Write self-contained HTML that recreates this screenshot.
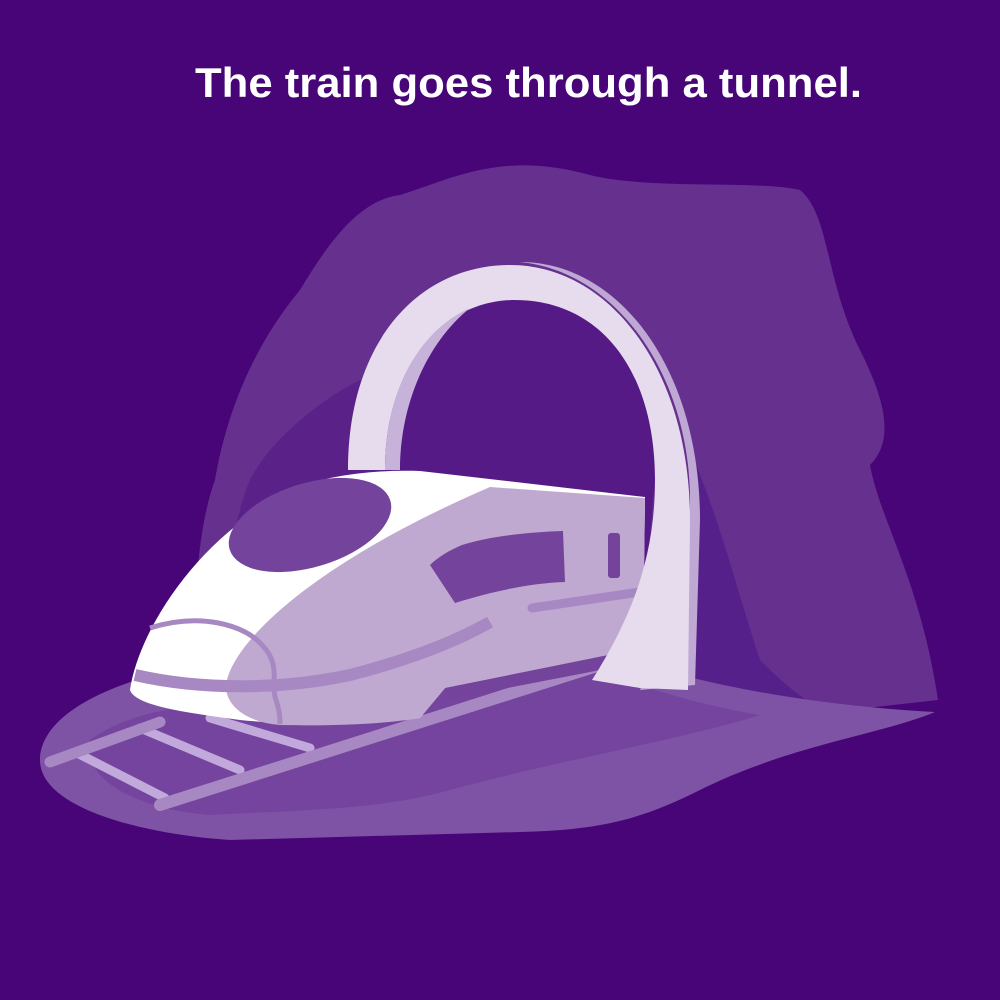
<!DOCTYPE html>
<html><head><style>
html,body{margin:0;padding:0;background:#470577;}
svg{display:block}
</style></head><body>
<svg width="1000" height="1000" viewBox="0 0 1000 1000" xmlns="http://www.w3.org/2000/svg">
<rect width="1000" height="1000" fill="#470577"/>
<text x="195" y="97" textLength="667" lengthAdjust="spacingAndGlyphs" font-family="Liberation Sans, sans-serif" font-weight="bold" font-size="42" fill="#ffffff">The train goes through a tunnel.</text>
<!-- mountain -->
<path d="M300,290 C330,240 360,200 400,195 C450,180 500,150 590,175 C650,190 760,180 800,190 C830,215 825,280 860,350 C885,400 895,440 870,465 C880,520 920,580 938,700 L830,712 C760,705 720,670 700,650 L600,660 L200,680 C190,600 200,520 215,480 C225,420 250,350 300,290 Z" fill="#66308f"/>
<!-- darker inner areas -->
<path d="M360,380 C320,400 270,440 250,480 C225,540 225,620 240,690 L620,680 L640,500 Z" fill="#5a2189"/>
<path d="M690,450 C720,520 740,600 760,660 C790,690 810,705 830,712 L690,700 Z" fill="#55208a"/>
<!-- ground -->
<path d="M40,760 C40,715 110,680 200,665 L600,650 C680,680 800,705 935,712 C880,735 790,745 700,790 C640,820 600,830 520,832 L230,840 C150,835 40,810 40,760 Z" fill="#7e53a5"/>
<path d="M90,740 C130,710 200,700 300,700 L600,670 C650,690 700,705 760,715 C680,740 560,760 450,790 C380,810 300,810 210,815 C140,810 80,780 90,740 Z" fill="#74449e"/>
<!-- rails -->
<g stroke-linecap="round">
<line x1="75" y1="752" x2="165" y2="798" stroke="#c2a9db" stroke-width="9"/>
<line x1="140" y1="728" x2="240" y2="770" stroke="#c2a9db" stroke-width="9"/>
<line x1="210" y1="718" x2="310" y2="748" stroke="#c2a9db" stroke-width="9"/>
<line x1="50" y1="762" x2="160" y2="722" stroke="#a888c2" stroke-width="11"/>
<line x1="160" y1="805" x2="600" y2="665" stroke="#a888c2" stroke-width="12"/>
</g>
<!-- tunnel interior -->
<path d="M385,470 C385,370 440,300 515,300 C600,300 655,370 655,480 L640,650 L385,690 Z" fill="#561a86"/>
<!-- train -->
<path d="M130,690 C140,620 220,505 330,478 C360,472 390,470 420,471 L645,497 L643,648 L445,688 L420,718 C380,724 300,726 240,720 C180,712 135,705 130,690 Z" fill="#ffffff"/>
<path d="M490,487 L645,498 L643,648 L445,688 L420,718 C380,725 320,726 280,725 C245,722 225,705 226,685 C232,640 320,560 490,487 Z" fill="#bfa9d1"/>
<path d="M445,688 L643,648 L640,662 L590,672 L445,700 Z" fill="#74449c"/>
<ellipse cx="310" cy="525" rx="84" ry="42" transform="rotate(-17 310 525)" fill="#74449c"/>
<path d="M430,565 L455,603 C490,592 530,583 565,582 L563,531 C530,532 490,536 462,545 C450,550 438,557 430,565 Z" fill="#74449c"/>
<rect x="608" y="533" width="12" height="45" rx="3" fill="#74449c"/>
<path d="M135,675 C200,690 280,690 350,675 C400,662 450,645 490,622" stroke="#a888c2" stroke-width="12" fill="none"/>
<line x1="532" y1="608" x2="640" y2="592" stroke="#a888c2" stroke-width="9" stroke-linecap="round"/>
<path d="M150,628 C200,612 245,625 262,645 C282,665 270,685 276,700 C280,712 280,718 280,724" stroke="#a888c2" stroke-width="5" fill="none"/>
<!-- arch -->
<path d="M520,262 C620,262 700,370 700,520 L695,685 L640,690 C670,620 690,560 690,500 C690,380 620,272 520,262 Z" fill="#bfa8d3"/>
<path d="M348,470 C348,340 420,265 510,265 C610,265 690,370 690,520 L688,690 L640,688 L592,680 C630,620 655,560 655,480 C655,370 600,300 515,300 C440,300 385,370 385,470 Z" fill="#e6dcee"/>
<path d="M385,470 C385,390 420,330 470,308 C430,340 400,400 400,470 Z" fill="#c7b2d9"/>
</svg>
</body></html>
